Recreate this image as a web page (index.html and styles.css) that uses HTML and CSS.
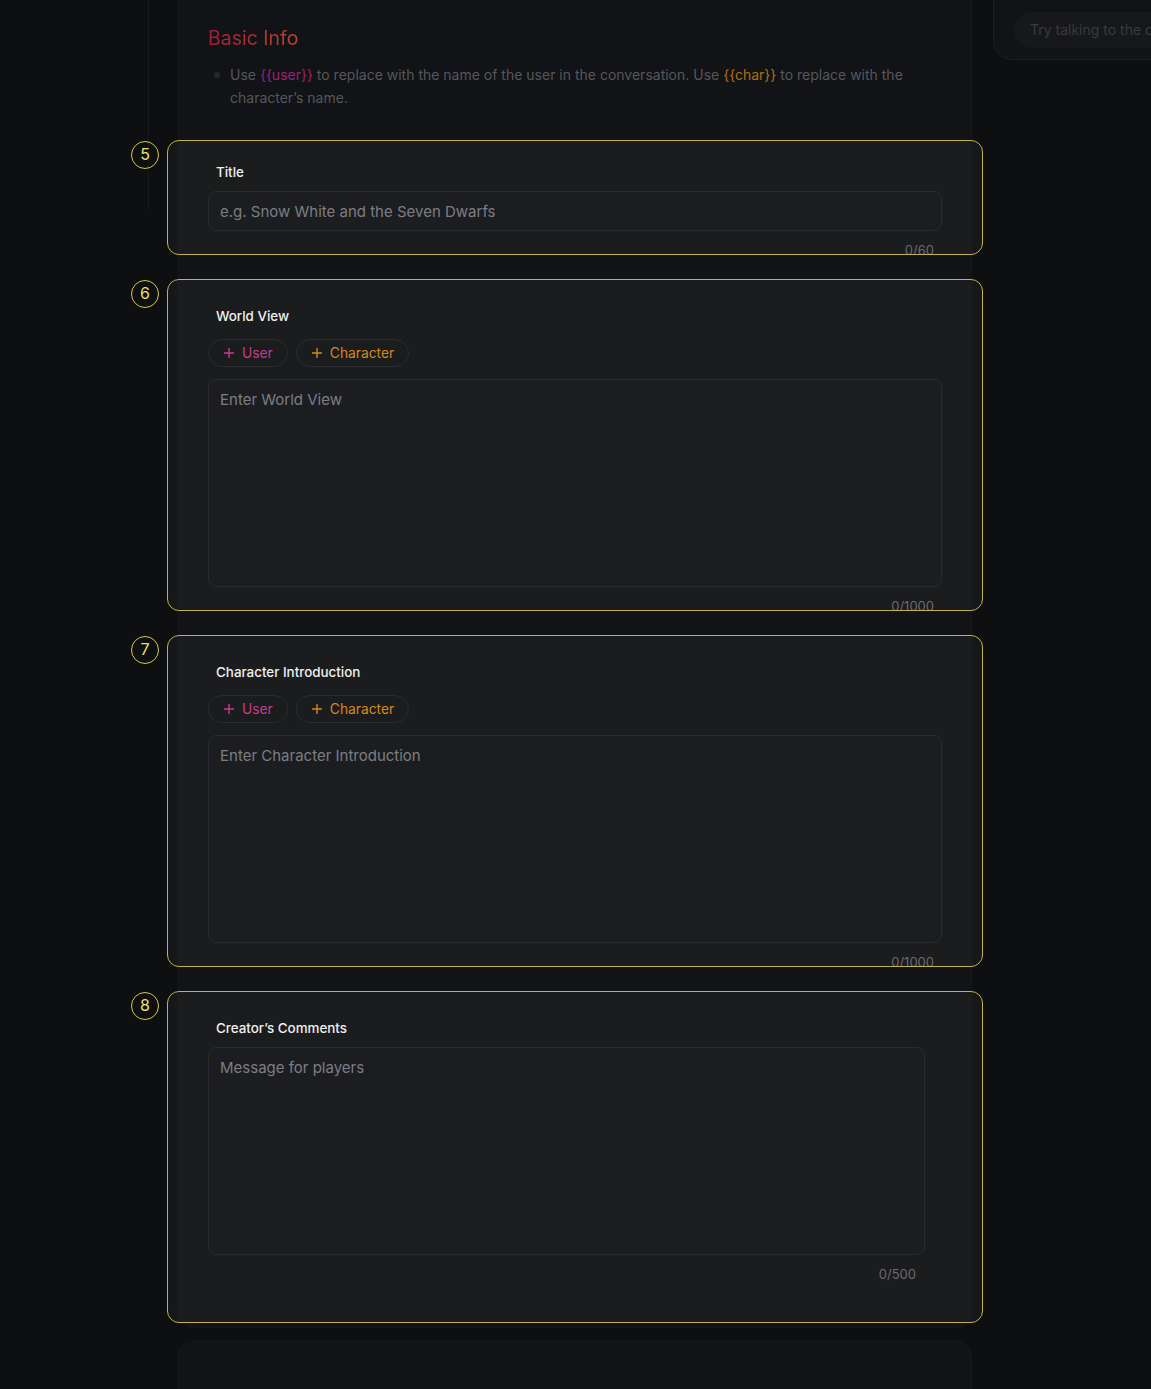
FILE: index.html
```html
<!DOCTYPE html>
<html lang="en">
<head>
<meta charset="utf-8">
<title>Create Story</title>
<link rel="stylesheet" href="styles.css">
</head>
<body>
<div class="page">
  <aside class="gutter">
    <div class="gutter-line"></div>
  </aside>

  <main class="main">
    <section class="card-main">
      <h2 class="heading">Basic Info</h2>
      <ul class="hint-list">
        <li>Use <span class="tok-user">{{user}}</span> to replace with the name of the user in the conversation. Use <span class="tok-char">{{char}}</span> to replace with the character’s name.</li>
      </ul>

      <div class="steps">
        <div class="step">
          <div class="step-num">5</div>
          <div class="spot spot-short">
            <div class="field field-short">
              <label class="field-label">Title</label>
              <input class="text-input" type="text" placeholder="e.g. Snow White and the Seven Dwarfs">
              <div class="counter">0/60</div>
            </div>
          </div>
        </div>

        <div class="step">
          <div class="step-num">6</div>
          <div class="spot">
            <div class="field">
              <label class="field-label">World View</label>
              <div class="chips">
                <button class="chip chip-user"><svg viewBox="0 0 12 12" class="plus"><path d="M6 1v10M1 6h10"/></svg>User</button>
                <button class="chip chip-char"><svg viewBox="0 0 12 12" class="plus"><path d="M6 1v10M1 6h10"/></svg>Character</button>
              </div>
              <textarea class="text-area" placeholder="Enter World View"></textarea>
              <div class="counter">0/1000</div>
            </div>
          </div>
        </div>

        <div class="step">
          <div class="step-num">7</div>
          <div class="spot">
            <div class="field">
              <label class="field-label">Character Introduction</label>
              <div class="chips">
                <button class="chip chip-user"><svg viewBox="0 0 12 12" class="plus"><path d="M6 1v10M1 6h10"/></svg>User</button>
                <button class="chip chip-char"><svg viewBox="0 0 12 12" class="plus"><path d="M6 1v10M1 6h10"/></svg>Character</button>
              </div>
              <textarea class="text-area" placeholder="Enter Character Introduction"></textarea>
              <div class="counter">0/1000</div>
            </div>
          </div>
        </div>

        <div class="step">
          <div class="step-num">8</div>
          <div class="spot">
            <div class="field field-last">
              <label class="field-label">Creator’s Comments</label>
              <div class="narrow">
                <textarea class="text-area" placeholder="Message for players"></textarea>
                <div class="counter counter-narrow">0/500</div>
              </div>
            </div>
          </div>
        </div>
      </div>
    </section>

    <section class="card-next"></section>
  </main>

  <aside class="side">
    <div class="chat-box">
      <div class="chat-input">Try talking to the character</div>
    </div>
  </aside>
</div>
</body>
</html>
```

FILE: styles.css
```css
* { box-sizing: border-box; }

html, body {
  margin: 0;
  padding: 0;
  background: #0e0f11;
  font-family: Inter, "Noto Sans", "Liberation Sans", sans-serif;
  height: 1389px;
  overflow: hidden;
}

.page {
  display: flex;
  align-items: flex-start;
  min-height: 1389px;
}

/* left gutter */
.gutter {
  width: 178px;
  flex: none;
}
.gutter-line {
  width: 149px;
  height: 210px;
  border-right: 1px solid #18191c;
}

/* main column */
.main {
  width: 794px;
  flex: none;
  display: flex;
  flex-direction: column;
  gap: 12px;
}

.card-main {
  background: #121316;
  border: 1px solid #16171a;
  border-top: none;
  border-radius: 0 0 16px 16px;
  padding: 24px 29px 4px 29px;
}

.card-next {
  height: 80px;
  background: #121316;
  border: 1px solid #16171a;
  border-bottom: none;
  border-radius: 16px 16px 0 0;
}

.heading {
  margin: 0;
  font-size: 19.5px;
  line-height: 28px;
  font-weight: 400;
  background: linear-gradient(90deg, #9e1e3e 0%, #b4462b 100%);
  -webkit-background-clip: text;
  background-clip: text;
  color: transparent;
  display: inline-block;
}

.hint-list {
  margin: 11px 0 0 0;
  padding: 0 0 0 22px;
  list-style: none;
}
.hint-list li {
  position: relative;
  font-size: 14px;
  line-height: 23px;
  color: #56575c;
  max-width: 690px;
}
.hint-list li::before {
  content: "";
  position: absolute;
  left: -16px;
  top: 9px;
  width: 6px;
  height: 6px;
  border-radius: 50%;
  background: #28292c;
}
.tok-user { color: #9a2377; }
.tok-char { color: #b0700f; }

/* tutorial steps */
.steps {
  margin: 31px -41px 0 -77px;
  display: flex;
  flex-direction: column;
  gap: 24px;
}

.step {
  display: flex;
  align-items: flex-start;
  gap: 8px;
}

.step-num {
  width: 28px;
  height: 28px;
  flex: none;
  margin-top: 1px;
  border: 1.3px solid #d8c74b;
  border-radius: 50%;
  color: #efdf6c;
  font-size: 16px;
  line-height: 25px;
  text-align: center;
}

.spot {
  flex: 1;
  height: 332px;
  border: 1px solid #c3b248;
  border-radius: 12px;
  background: #161719;
  padding: 0 10px;
  overflow: hidden;
}
.spot-short { height: 115px; }

.field {
  height: 100%;
  background: #1b1c1e;
  padding: 26px 30px 0 30px;
}
.field-short { padding-top: 21px; }

.field-label {
  display: block;
  padding-left: 8px;
  font-size: 13.4px;
  line-height: 20px;
  font-weight: 500;
  color: #efefef;
}

.text-input {
  display: block;
  width: 100%;
  height: 40px;
  margin-top: 9px;
  padding: 0 11px;
  background: #1c1d20;
  border: 1px solid #2a2b2e;
  border-radius: 8px;
  font-family: inherit;
  font-size: 15px;
  color: #e0e0e0;
  outline: none;
}

.text-area {
  display: block;
  width: 100%;
  height: 208px;
  padding: 9px 11px;
  background: #1c1d20;
  border: 1px solid #2a2b2e;
  border-radius: 8px;
  font-family: inherit;
  font-size: 15px;
  line-height: 22px;
  color: #e0e0e0;
  resize: none;
  outline: none;
}

.text-input::placeholder,
.text-area::placeholder {
  color: #7d7e83;
}

.chips {
  display: flex;
  gap: 8px;
  margin: 13px 0 12px 0;
}

.chip {
  display: flex;
  align-items: center;
  gap: 7px;
  height: 28px;
  padding: 0 14px 0 14px;
  background: transparent;
  border: 1px solid #2a2b2e;
  border-radius: 14px;
  font-family: inherit;
  font-size: 13.8px;
}
.chip-user { color: #c83a8d; }
.chip-char { color: #d4881b; }

.plus {
  width: 12px;
  height: 12px;
  fill: none;
  stroke: currentColor;
  stroke-width: 1.4;
}

.counter {
  margin-top: 10px;
  padding-right: 8px;
  text-align: right;
  font-size: 13px;
  line-height: 18px;
  color: #6a6b70;
}

.narrow {
  width: 717px;
  margin-top: 9px;
}
.counter-narrow { padding-right: 9px; }

/* right side */
.side {
  flex: 1;
  min-width: 0;
  overflow: hidden;
  padding-left: 21px;
}

.chat-box {
  width: 320px;
  height: 60px;
  background: #121315;
  border: 1px solid #1d1e21;
  border-top: none;
  border-radius: 0 0 0 20px;
  padding: 12px 0 0 20px;
}

.chat-input {
  height: 36px;
  border-radius: 18px;
  background: #17181a;
  padding-left: 16px;
  font-size: 14px;
  line-height: 36px;
  color: #393a3e;
  white-space: nowrap;
  overflow: hidden;
}
```
